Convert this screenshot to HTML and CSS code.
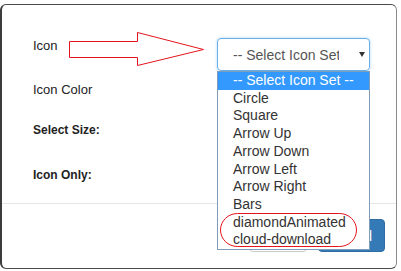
FILE: index.html
```html
<!DOCTYPE html>
<html>
<head>
<title>Icon Settings</title>
<meta name="viewport" content="width=device-width, initial-scale=1.0">
<link rel="stylesheet" href="styles.css">
</head>
<body>

<div class="modal">
  <section class="modal-body">
    <div class="row row-icon">
      <label class="lbl">Icon</label>
      <div class="picker">
        <div class="select">
          <span class="select-text">-- Select Icon Set --</span>
          <span class="caret"></span>
        </div>
        <ul class="options">
          <li class="active">-- Select Icon Set --</li>
          <li>Circle</li>
          <li>Square</li>
          <li>Arrow Up</li>
          <li>Arrow Down</li>
          <li>Arrow Left</li>
          <li>Arrow Right</li>
          <li>Bars</li>
          <li>diamondAnimated</li>
          <li>cloud-download</li>
        </ul>
      </div>
    </div>
    <div class="row row-color">
      <label class="lbl">Icon Color</label>
    </div>
    <div class="row row-size">
      <label class="lbl lbl-bold">Select Size:</label>
    </div>
    <div class="row row-only">
      <label class="lbl lbl-bold">Icon Only:</label>
    </div>
  </section>

  <footer class="modal-footer">
    <button class="btn btn-default">Close</button>
    <button class="btn btn-primary">Build</button>
  </footer>
</div>

<!-- red annotations drawn over the screenshot -->
<svg class="notes" width="401" height="271" viewBox="0 0 401 271">
  <polygon points="69.5,41.5 137.5,41.5 137.5,32.5 203.5,49.5 137.5,65.5 137.5,57.5 69.5,57.5"
           fill="none" stroke="#e3141c" stroke-width="1"/>
  <rect x="220.5" y="213.5" width="136" height="33" rx="17" ry="16.5"
        fill="none" stroke="#e3141c" stroke-width="1"/>
</svg>

</body>
</html>
```

FILE: styles.css
```css
body {
   background-color: #fff;
   color: #333;
   font-family: "Liberation Sans", Arial, sans-serif;
   margin: 0;
   overflow: hidden;
   height:271px; width:401px;}

.modal {
   background-color: #fff;
   border: 1px solid #4a4a4a;
   border-left: 2px solid #3c3c3c;
   border-right-color: #8a8a8a;
   border-radius: 6px;
   box-sizing: border-box;
   display: flex;
   flex-direction: column;
   margin: 4px 0 0 0;
   height:265px; width:397px;}

.modal-body {
   box-sizing: border-box;
   padding: 31px 0 0 31px;
   height:198px;}

.row {
   display: flex;
   align-items: flex-start;}

.row-icon { height:36px;}
.row-color { margin-top: 8px;}
.row-size { margin-top: 20px;}
.row-only { margin-top: 25px;}

.lbl {
   color: #222;
   font-size: 13px;
   line-height: 20px;
   width:184px;}

.lbl-bold {
   font-size: 12px;
   font-weight: bold;}

.picker {
   margin-top: 2px;
   position: relative;
   z-index: 2;
   width:153px;}

.select {
   align-items: center;
   border: 1px solid #66afe9;
   border-radius: 4px;
   box-shadow: 0 0 3px rgba(102, 175, 233, .5);
   box-sizing: border-box;
   display: flex;
   padding: 0 4px 0 15px;
   height:33px;}

.select-text {
   color: #555;
   font-size: 14px;
   overflow: hidden;
   white-space: nowrap;
   width:106px;}

.caret {
   border-left: 3.5px solid transparent;
   border-right: 3.5px solid transparent;
   border-top: 5px solid #333;
   margin-left: auto;
   height:0; width:0;}

.options {
   background-color: #fff;
   border: 1px solid #7f9db9;
   box-sizing: border-box;
   left: 0;
   list-style: none;
   margin: 0;
   padding: 0;
   position: absolute;
   top: 100%;
   width:153px;}

.options li {
   color: #333;
   font-size: 14px;
   line-height: 17.7px;
   padding-left: 15px;
   white-space: nowrap;}

.options li.active {
   background-color: #3399ff;
   color: #fff;}

.modal-footer {
   border-top: 1px solid #e5e5e5;
   display: flex;
   gap: 11px;
   justify-content: flex-end;
   padding: 15px 11px 0 0;}

.btn {
   border: 1px solid #ccc;
   border-radius: 4px;
   box-sizing: border-box;
   font-family: inherit;
   font-size: 14px;
   padding: 0 12px;
   height:33px;}

.btn-default {
   background-color: #fff;
   color: #333;
   width:58px;}

.btn-primary {
   background-color: #337ab7;
   border-color: #2e6da4;
   color: #fff;
   text-align: right;
   width:67px;}

.notes {
   left: 0;
   pointer-events: none;
   position: absolute;
   top: 0;
   z-index: 3;}
```
